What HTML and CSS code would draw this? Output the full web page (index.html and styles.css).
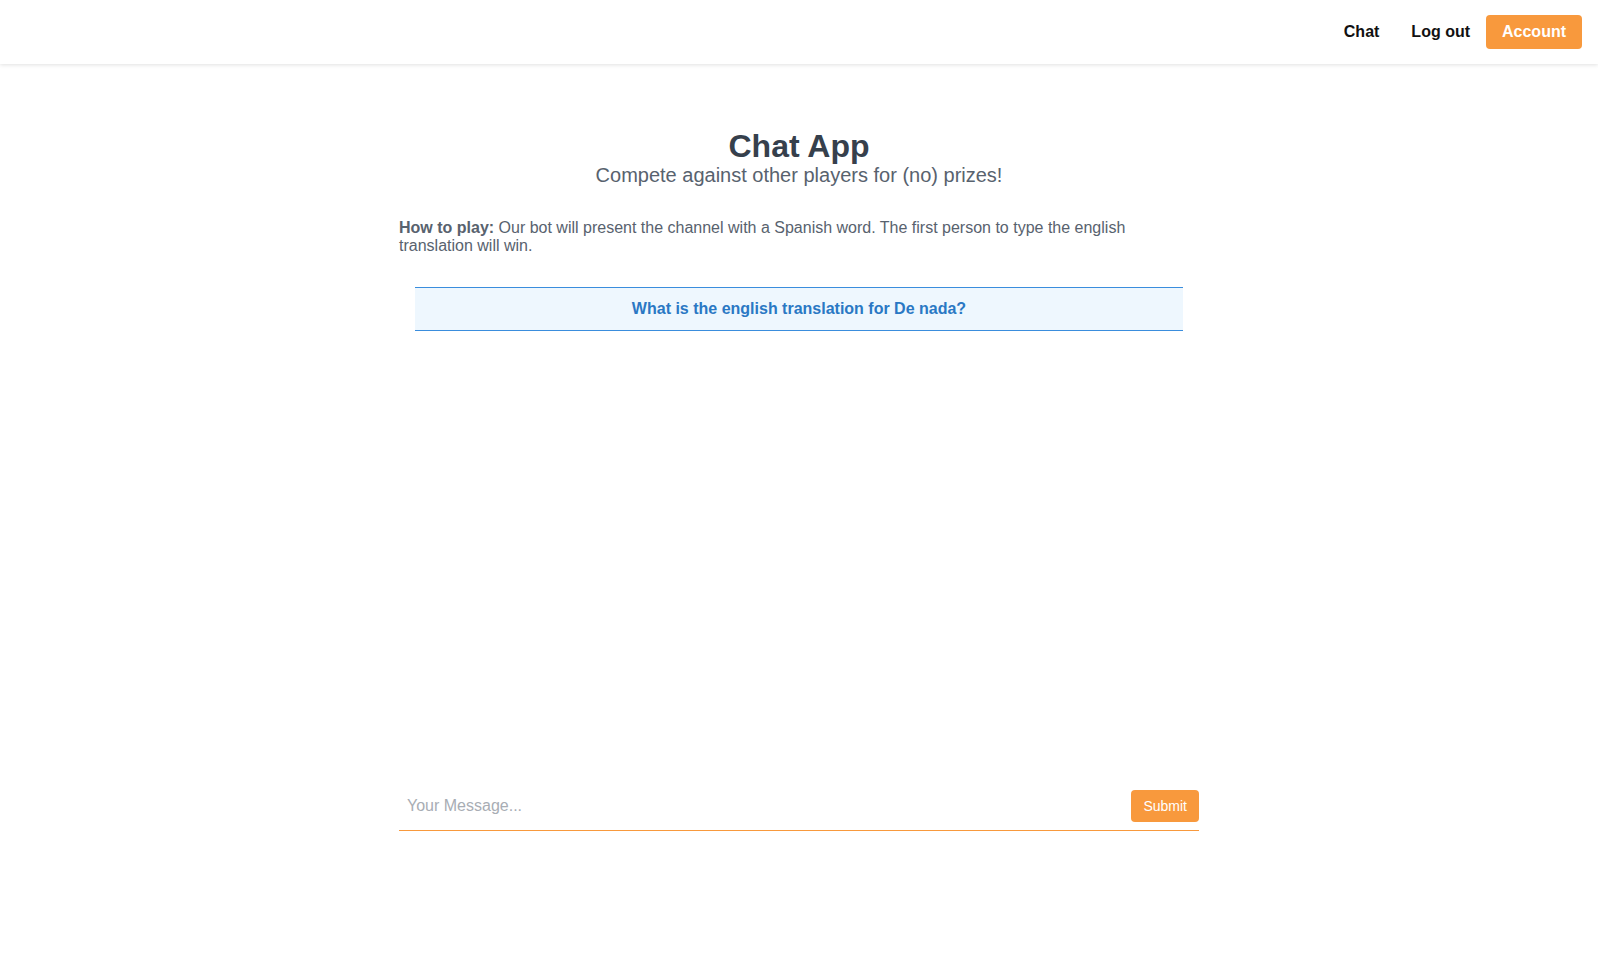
FILE: index.html
```html
<!DOCTYPE html>
<html lang="en">
<head>
<meta charset="utf-8">
<title>Chat App</title>
<link rel="stylesheet" href="styles.css">
</head>
<body>
<header class="topbar">
  <nav class="nav">
    <a class="nav-link" href="#">Chat</a>
    <a class="nav-link" href="#">Log out</a>
    <a class="nav-link nav-account" href="#">Account</a>
  </nav>
</header>
<main class="container">
  <h1 class="title">Chat App</h1>
  <p class="subtitle">Compete against other players for (no) prizes!</p>
  <p class="howto"><strong>How to play:</strong> Our bot will present the channel with a Spanish word. The first person to type the english translation will win.</p>
  <div class="question">What is the english translation for De nada?</div>
  <div class="messages"></div>
  <form class="composer">
    <input class="composer-input" type="text" placeholder="Your Message...">
    <button class="composer-submit" type="button">Submit</button>
  </form>
</main>
</body>
</html>
```

FILE: styles.css
```css
* { box-sizing: border-box; }

body {
  margin: 0;
  background: #ffffff;
  font-family: "Liberation Sans", Arial, sans-serif;
}

.topbar {
  height: 64px;
  display: flex;
  justify-content: flex-end;
  align-items: center;
  padding-right: 16px;
  background: #fff;
  box-shadow: 0 1px 4px rgba(0, 0, 0, 0.12);
}

.nav {
  display: flex;
  align-items: center;
}

.nav-link {
  padding: 8px 16px;
  font-size: 16px;
  font-weight: bold;
  color: #111;
  text-decoration: none;
  line-height: 18px;
}

.nav-account {
  background: #f8993d;
  color: #fff;
  border-radius: 4px;
}

.container {
  width: 800px;
  margin: 0 auto;
}

.title {
  margin: 64px 0 0;
  text-align: center;
  font-size: 32px;
  font-weight: bold;
  color: #36404c;
  line-height: normal;
}

.subtitle {
  margin: -1px 0 0;
  text-align: center;
  font-size: 20px;
  color: #58626e;
  line-height: normal;
}

.howto {
  margin: 32px 0 0;
  font-size: 16px;
  color: #58626e;
  line-height: 18px;
}

.question {
  margin: 32px 16px 0;
  padding: 12px;
  border-top: 1px solid #3a8ddd;
  border-bottom: 1px solid #3a8ddd;
  background: #eef7fe;
  text-align: center;
  font-size: 16px;
  font-weight: bold;
  color: #2a78c4;
  line-height: normal;
}

.messages {
  height: 451px;
}

.composer {
  display: flex;
  align-items: center;
  padding: 8px 0;
  border-bottom: 1px solid #f8993d;
}

.composer-input {
  flex: 1;
  border: none;
  outline: none;
  padding: 0 8px;
  font-family: "Liberation Sans", Arial, sans-serif;
  font-size: 16px;
  color: #333;
  background: transparent;
}

.composer-input::placeholder {
  color: #a8adb4;
}

.composer-submit {
  border: none;
  background: #f8993d;
  color: #fff;
  font-family: "Liberation Sans", Arial, sans-serif;
  font-size: 14px;
  padding: 8px 12px;
  border-radius: 4px;
  line-height: 16px;
}
```
